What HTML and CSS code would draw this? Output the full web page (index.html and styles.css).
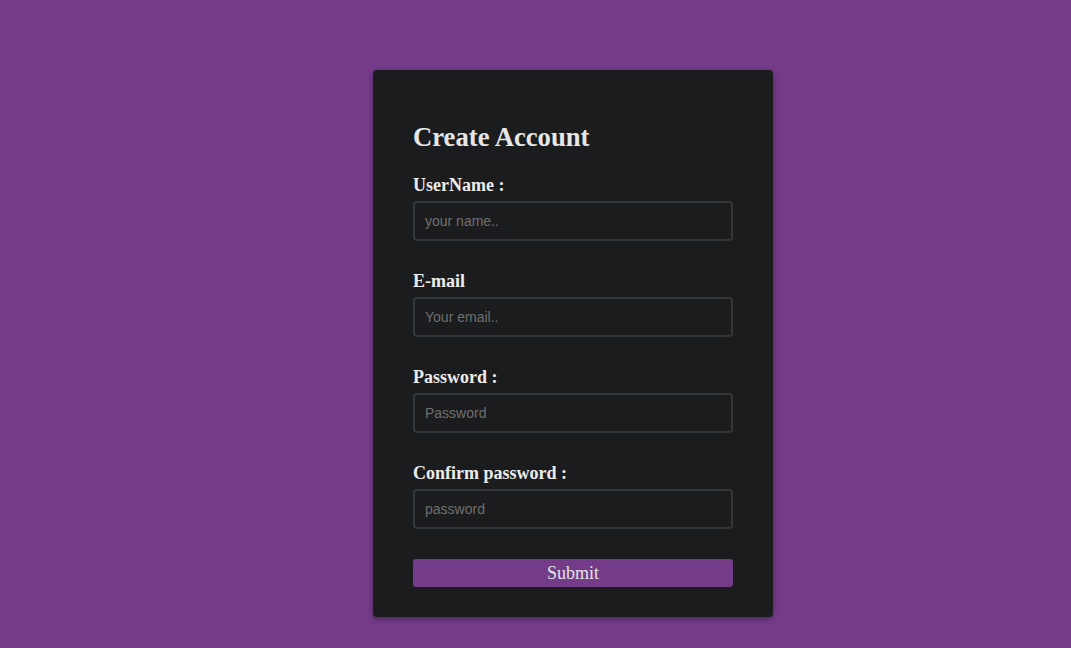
FILE: index.html
```html
<!DOCTYPE html>
<html lang="en">
<head>
<meta charset="utf-8">
<title>Create Account</title>
<link rel="stylesheet" href="styles.css">
</head>
<body>
<form class="card">
  <h2 class="title">Create Account</h2>
  <div class="field">
    <label class="label" for="u">UserName :</label>
    <input class="input" id="u" type="text" placeholder="your name..">
  </div>
  <div class="field">
    <label class="label" for="e">E-mail</label>
    <input class="input" id="e" type="text" placeholder="Your email..">
  </div>
  <div class="field">
    <label class="label" for="p">Password :</label>
    <input class="input" id="p" type="password" placeholder="Password">
  </div>
  <div class="field">
    <label class="label" for="c">Confirm password :</label>
    <input class="input" id="c" type="password" placeholder="password">
  </div>
  <button class="submit" type="button">Submit</button>
</form>
</body>
</html>
```
FILE: styles.css
```css
html, body {
  margin: 0;
  padding: 0;
}
body {
  background: #733b88;
  min-height: 648px;
  font-family: "Liberation Serif", "Times New Roman", serif;
  overflow: hidden;
}
.card {
  box-sizing: border-box;
  width: 400px;
  margin: 70px 0 0 373px;
  padding: 40px 40px 30px;
  background: #1b1c1e;
  border-radius: 4px;
  box-shadow: 0 2px 5px rgba(0, 0, 0, 0.35);
  display: flex;
  flex-direction: column;
}
.title {
  margin: 12px 0 22px;
  font-size: 26.67px;
  line-height: 31px;
  font-weight: bold;
  color: #e6e6e6;
}
.field {
  display: flex;
  flex-direction: column;
  margin-bottom: 30px;
}
.label {
  font-size: 18px;
  line-height: 21px;
  font-weight: bold;
  color: #ececec;
  margin-bottom: 5px;
}
.input {
  box-sizing: border-box;
  width: 320px;
  height: 40px;
  padding: 0 10px;
  background: #1b1c1e;
  border: 2px solid #333739;
  border-radius: 4px;
  font-family: "Liberation Sans", Arial, sans-serif;
  font-size: 14px;
  color: #ddd;
  outline: none;
}
.input::placeholder {
  color: #6f6f6f;
}
.submit {
  width: 320px;
  height: 28px;
  padding: 0;
  border: none;
  border-radius: 3px;
  background: #733b88;
  color: #e4e4e4;
  font-family: "Liberation Serif", "Times New Roman", serif;
  font-size: 18px;
  line-height: 28px;
}
```
